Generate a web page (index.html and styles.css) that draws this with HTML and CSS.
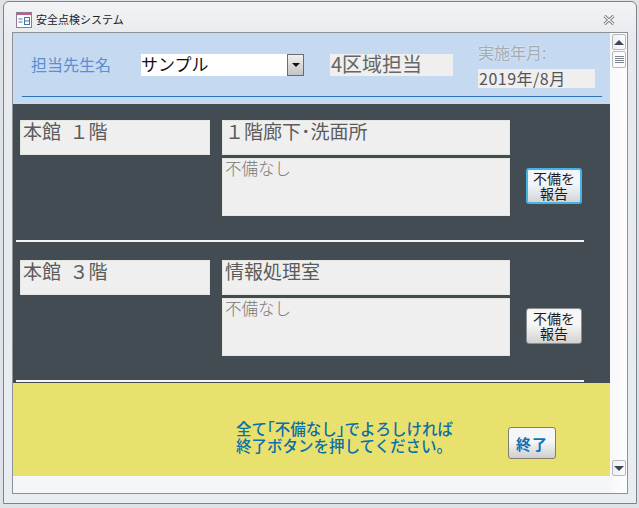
FILE: index.html
```html
<!DOCTYPE html>
<html lang="ja">
<head>
    <meta charset="UTF-8" />
    <title>安全点検システム</title>
    <link rel="stylesheet" href="styles.css">
</head>
<body>
    <div class="window">
        <div class="titlebar">
            <svg class="form-icon" width="16" height="16" viewBox="0 0 16 16">
                <rect x="0.5" y="0.5" width="15" height="15" fill="#fff" stroke="#8f7a98" />
                <rect x="1" y="1" width="14" height="2" fill="#c0608a" />
                <path d="M2.5 7h4M2.5 10h4" stroke="#3f74b5" fill="none" />
                <rect x="8.5" y="5.5" width="5" height="7" fill="#fff" stroke="#3f74b5" />
                <path d="M8.5 9h5" stroke="#3f74b5" />
            </svg>
            <span class="title-text">安全点検システム</span>
            <svg class="close-icon" width="12" height="10" viewBox="0 0 12 10">
                <path d="M1.5 1l9 8M10.5 1l-9 8" stroke="#666" stroke-width="3" fill="none" />
                <path d="M1.5 1l9 8M10.5 1l-9 8" stroke="#f4f4f4" stroke-width="1.4" fill="none" />
            </svg>
        </div>

        <div class="client">
            <div class="form">
                <div class="form-header">
                    <div class="header-row">
                        <span class="teacher-label">担当先生名</span>
                        <div class="combo">
                            <span class="combo-text">サンプル</span>
                            <span class="combo-btn"><i class="arrow-down"></i></span>
                        </div>
                        <div class="area-box">4区域担当</div>
                        <div class="date-group">
                            <span class="date-label">実施年月:</span>
                            <div class="date-box">2019年/8月</div>
                        </div>
                    </div>
                </div>

                <div class="form-detail">
                    <div class="room">
                        <div class="field floor">本館&nbsp;&nbsp;１階</div>
                        <div class="field place">１階廊下･洗面所</div>
                        <div class="field note">不備なし</div>
                        <button class="report-btn focused">不備を<br>報告</button>
                    </div>
                    <div class="room">
                        <div class="field floor">本館&nbsp;&nbsp;３階</div>
                        <div class="field place">情報処理室</div>
                        <div class="field note">不備なし</div>
                        <button class="report-btn">不備を<br>報告</button>
                    </div>
                </div>

                <div class="form-footer">
                    <p class="footer-msg">全て｢不備なし｣でよろしければ<br>終了ボタンを押してください。</p>
                    <button class="end-btn">終了</button>
                </div>
                <div class="form-blank"></div>
            </div>

            <div class="scrollbar">
                <div class="scroll-btn"><i class="arrow-up"></i></div>
                <div class="scroll-thumb"></div>
                <div class="scroll-track"></div>
                <div class="scroll-btn"><i class="arrow-down"></i></div>
            </div>
        </div>
    </div>
</body>
</html>
```

FILE: styles.css
```css
html, body {
    margin: 0;
    padding: 0;
}

body {
    width: 639px;
    height: 508px;
    overflow: hidden;
    background: #dfe3e8;
    font-family: "Noto Sans CJK JP", "Liberation Sans", sans-serif;
}

.window {
    box-sizing: border-box;
    width: 634px;
    height: 503px;
    margin: 1px 0 0 3px;
    padding: 0 8px 9px 8px;
    border: 1px solid #7d8388;
    border-radius: 6px 6px 0 0;
    background: linear-gradient(#f2f3f4, #e6eaee 40px, #e8edf2);
    display: flex;
    flex-direction: column;
}

.titlebar {
    height: 30px;
    display: flex;
    align-items: center;
    flex-shrink: 0;
}

.form-icon {
    margin-left: 4px;
    margin-top: 5px;
}

.title-text {
    margin-left: 4px;
    margin-top: 4px;
    font-size: 11px;
    color: #222;
}

.close-icon {
    margin-left: auto;
    margin-right: 13px;
    margin-top: 6px;
}

.client {
    flex: 1;
    display: flex;
    border: 1px solid #8e9296;
    background: #f5f6f8;
    min-height: 0;
}

.form {
    width: 597px;
    display: flex;
    flex-direction: column;
}

/* header */
.form-header {
    height: 71px;
    background: #c5d9f1;
    box-sizing: border-box;
    padding: 0 8px 7px 9px;
}

.header-row {
    height: 64px;
    border-bottom: 1px solid #2a74b4;
    box-sizing: border-box;
    display: flex;
    padding-left: 9px;
}

.teacher-label {
    width: 110px;
    margin-top: 20px;
    font-size: 16px;
    line-height: 22px;
    color: #5b8fd0;
}

.combo {
    width: 163px;
    height: 22px;
    margin-top: 21px;
    display: flex;
    background: #fff;
}

.combo-text {
    flex: 1;
    font-size: 17px;
    line-height: 19px;
    color: #111;
}

.combo-btn {
    box-sizing: border-box;
    width: 17px;
    height: 22px;
    border: 1px solid #6c6c6c;
    background: linear-gradient(#f0f0f0, #c4c4c4);
    display: flex;
    align-items: center;
    justify-content: center;
}

.area-box {
    width: 123px;
    height: 22px;
    margin-top: 21px;
    margin-left: 26px;
    background: #efefef;
    font-size: 20px;
    line-height: 20px;
    padding-left: 1px;
    box-sizing: border-box;
    color: #666;
}

.date-group {
    margin-left: 25px;
    display: flex;
    flex-direction: column;
}

.date-label {
    margin-top: 9px;
    height: 27px;
    font-size: 16px;
    line-height: 20px;
    color: #a3abb4;
    text-shadow: 0 0 2px #eef3fa;
}

.date-box {
    width: 117px;
    height: 19px;
    background: #efefef;
    font-size: 16px;
    letter-spacing: 0.5px;
    line-height: 19px;
    padding-left: 1px;
    box-sizing: border-box;
    color: #555;
    white-space: nowrap;
}

/* detail */
.form-detail {
    background: #434c53;
    padding: 16px 26px 1px 3px;
    height: 279px;
    box-sizing: border-box;
}

.room {
    display: grid;
    grid-template-columns: 190px 288px 60px;
    grid-template-rows: 35px 58px;
    column-gap: 12px;
    row-gap: 3px;
    padding: 0 0 24px 4px;
    margin-bottom: 18px;
    border-bottom: 2px solid #f4f4f4;
}

.room:last-child {
    margin-bottom: 0;
}

.field {
    background: #efefef;
    box-sizing: border-box;
    border: 1px solid #e4e6e0;
    padding-left: 2px;
    color: #5c5c5c;
}

.floor, .place {
    font-size: 19px;
    line-height: 19px;
    white-space: nowrap;
}

.note {
    grid-column: 2;
    font-size: 16.5px;
    font-weight: 300;
    line-height: 19px;
    color: #777;
}

.report-btn {
    grid-column: 3;
    grid-row: 1 / 3;
    margin: 48px 0 0 4px;
    width: 56px;
    height: 36px;
    padding: 0;
    box-sizing: border-box;
    border: 1px solid #8a8f94;
    border-radius: 3px;
    background: linear-gradient(#f6f6f6 45%, #d2d2d2);
    font-family: inherit;
    font-size: 14px;
    line-height: 15px;
    color: #1c1c1c;
}

.report-btn.focused {
    border: 2px solid #45b4e4;
    background: linear-gradient(#f2f6fa 45%, #d2d5d8);
}

/* footer */
.form-footer {
    height: 93px;
    background: #e9e16d;
    display: flex;
}

.footer-msg {
    margin: 37px 0 0 223px;
    width: 272px;
    font-size: 15.5px;
    font-weight: 500;
    line-height: 17px;
    color: #0b6fa8;
    white-space: nowrap;
}

.end-btn {
    margin-top: 44px;
    width: 48px;
    height: 32px;
    padding: 0;
    box-sizing: border-box;
    border: 1px solid #7f7f6a;
    border-radius: 3px;
    background: linear-gradient(#f5f6f7 45%, #cfcfcf);
    font-family: inherit;
    font-size: 15px;
    letter-spacing: 1px;
    font-weight: 700;
    color: #1273b4;
}

.form-blank {
    flex: 1;
    background: #f5f6f8;
}

/* scrollbar */
.scrollbar {
    flex: 1;
    box-sizing: border-box;
    padding: 1px 1px 17px 2px;
    display: flex;
    flex-direction: column;
    gap: 1px;
    background: linear-gradient(90deg, #f8f8fa, #fdfdfe);
}

.scroll-btn, .scroll-thumb {
    flex-shrink: 0;
    box-sizing: border-box;
    height: 16px;
    border: 1px solid #b5bac0;
    border-radius: 2px;
    background: linear-gradient(90deg, #eef0f3, #fbfbfc);
    display: flex;
    align-items: center;
    justify-content: center;
}

.scroll-thumb {
    height: 17px;
    background-image: repeating-linear-gradient(#7c838a 0 1px, transparent 1px 2px);
    background-size: 9px 7px;
    background-repeat: no-repeat;
    background-position: center;
}

.scroll-track {
    flex: 1;
}

.arrow-up, .arrow-down {
    display: block;
    width: 0;
    height: 0;
    border-left: 5px solid transparent;
    border-right: 5px solid transparent;
}

.arrow-up {
    border-bottom: 5px solid #3d4657;
}

.arrow-down {
    border-top: 5px solid #3d4657;
}

.combo-btn .arrow-down {
    border-left-width: 4px;
    border-right-width: 4px;
    border-top: 4px solid #111;
}
```
